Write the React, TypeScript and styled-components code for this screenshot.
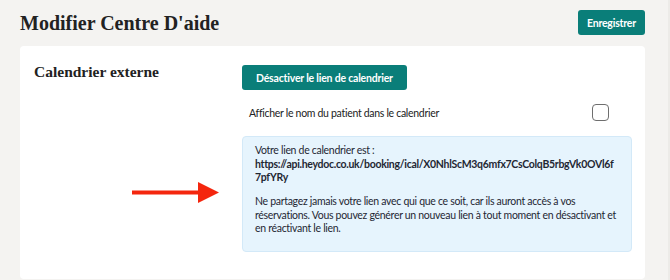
import React, { useState } from "react";
import styled, { createGlobalStyle } from "styled-components";

const GlobalStyle = createGlobalStyle`
  html, body {
    margin: 0;
    padding: 0;
    background: #f4f3f1;
  }
  body {
    font-family: "Lato", "Liberation Sans", sans-serif;
    color: #222;
  }
`;

const calendarLink =
  "https://api.heydoc.co.uk/booking/ical/X0NhlScM3q6mfx7CsColqB5rbgVk0OVl6f7pfYRy";

const App: React.FC = () => {
  const [showName, setShowName] = useState(false);

  return (
    <>
      <GlobalStyle />
      <Page>
        <Header>
          <Title>Modifier Centre D'aide</Title>
          <PrimaryButton $pad={9}>Enregistrer</PrimaryButton>
        </Header>

        <Card>
          <SectionTitle>Calendrier externe</SectionTitle>

          <Settings>
            <PrimaryButton $pad={14}>Désactiver le lien de calendrier</PrimaryButton>

            <OptionRow>
              <OptionLabel>Afficher le nom du patient dans le calendrier</OptionLabel>
              <Checkbox
                type="checkbox"
                checked={showName}
                onChange={() => setShowName(!showName)}
              />
            </OptionRow>

            <InfoBox>
              <InfoText>
                Votre lien de calendrier est :
                <br />
                <LinkText>{calendarLink}</LinkText>
              </InfoText>
              <InfoText>
                Ne partagez jamais votre lien avec qui que ce soit, car ils auront accès
                à vos réservations. Vous pouvez générer un nouveau lien à tout moment en
                désactivant et en réactivant le lien.
              </InfoText>
            </InfoBox>
          </Settings>

          {/* annotation arrow */}
          <Arrow width="88" height="21" viewBox="0 0 88 21">
            <rect x="0" y="8.5" width="68" height="4" fill="#f4260e" />
            <polygon points="66,0 87,10.5 66,21" fill="#f4260e" />
          </Arrow>
        </Card>
      </Page>
    </>
  );
};

/* ================== STYLED COMPONENTS ================== */

const Page = styled.div`
  height: 280px;
  box-sizing: border-box;
  padding: 10px 23px 0 20px;
  overflow: hidden;
  border-right: 2px solid #ecebe8;
`;

const Header = styled.div`
  display: flex;
  justify-content: space-between;
  align-items: center;
  height: 25px;
`;

const Title = styled.h1`
  margin: 0;
  font-family: "Liberation Serif", serif;
  font-weight: 700;
  font-size: 20px;
  line-height: 24px;
  color: #222;
`;

const PrimaryButton = styled.button<{ $pad: number }>`
  height: 25px;
  padding: 0 ${({ $pad }) => $pad}px;
  border: none;
  border-radius: 3px;
  background: #0a7e79;
  color: #fff;
  font-family: "Lato", "Liberation Sans", sans-serif;
  font-weight: 700;
  font-size: 10.5px;
  letter-spacing: -0.2px;
  cursor: pointer;
  align-self: flex-start;
`;

const Card = styled.div`
  position: relative;
  margin-top: 11px;
  display: grid;
  grid-template-columns: 222px 1fr;
  padding: 19px 13px 27px 0;
  background: #fff;
  border-radius: 4px;
`;

const SectionTitle = styled.h2`
  margin: -2px 0 0;
  padding-left: 14px;
  font-family: "Liberation Serif", serif;
  font-weight: 700;
  font-size: 15.5px;
  line-height: 18px;
  color: #222;
`;

const Settings = styled.div`
  display: flex;
  flex-direction: column;
`;

const OptionRow = styled.label`
  display: flex;
  align-items: center;
  justify-content: space-between;
  margin-top: 14px;
  padding: 0 23px 0 7px;
`;

const OptionLabel = styled.span`
  font-size: 10.5px;
  letter-spacing: -0.3px;
  color: #222;
`;

const Checkbox = styled.input`
  appearance: none;
  margin: 0;
  width: 17px;
  height: 17px;
  box-sizing: border-box;
  border: 1.5px solid #6e6e6e;
  border-radius: 4px;
  background: #fff;
  cursor: pointer;

  &:checked {
    background: #0a7e79;
    border-color: #0a7e79;
  }
`;

const InfoBox = styled.div`
  margin-top: 15px;
  padding: 7px 12px 15px;
  background: #e6f4fd;
  border: 1px solid #d3e9f8;
  border-radius: 4px;
`;

const InfoText = styled.p`
  margin: 0;
  font-size: 10.5px;
  line-height: 13.5px;
  letter-spacing: -0.3px;
  color: #1f2733;

  & + & {
    margin-top: 10.5px;
  }
`;

const LinkText = styled.strong`
  font-weight: 700;
  letter-spacing: -0.3px;
  word-break: break-all;
`;

const Arrow = styled.svg`
  position: absolute;
  left: 112px;
  top: 136px;
`;

export default App;
